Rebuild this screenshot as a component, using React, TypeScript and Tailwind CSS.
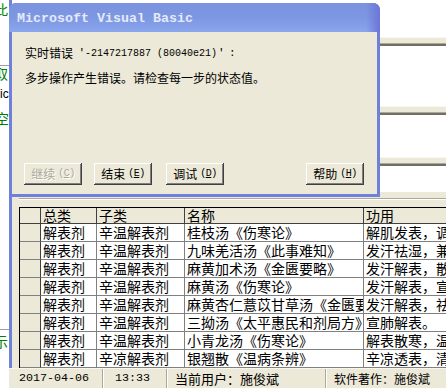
import React from "react";

const rows: string[][] = [
  ["解表剂", "辛温解表剂", "桂枝汤《伤寒论》", "解肌发表，调和营卫"],
  ["解表剂", "辛温解表剂", "九味羌活汤《此事难知》", "发汗祛湿，兼清里热"],
  ["解表剂", "辛温解表剂", "麻黄加术汤《金匮要略》", "发汗解表，散寒祛湿"],
  ["解表剂", "辛温解表剂", "麻黄汤《伤寒论》", "发汗解表，宣肺平喘"],
  ["解表剂", "辛温解表剂", "麻黄杏仁薏苡甘草汤《金匮要略》", "发汗解表，祛风除湿"],
  ["解表剂", "辛温解表剂", "三拗汤《太平惠民和剂局方》", "宣肺解表。"],
  ["解表剂", "辛温解表剂", "小青龙汤《伤寒论》", "解表散寒，温肺化饮"],
  ["解表剂", "辛凉解表剂", "银翘散《温病条辨》", "辛凉透表，清热解毒"],
];

function Bar() {
  return (
    <div className="flex flex-col">
      <div className="h-[1px] bg-[#f7f6f1]" />
      <div className="h-[5px] bg-[#ECE9D8]" />
      <div className="h-[1px] bg-[#aca899]" />
      <div className="h-[2px] bg-[#716f64]" />
    </div>
  );
}

function Btn({ label, k, disabled }: { label: string; k: string; disabled?: boolean }) {
  return (
    <div
      className={
        "w-[58px] h-[22px] flex items-center justify-center bg-[#ECE9D8] shadow-[inset_-1px_-1px_#404040,inset_1px_1px_#ffffff,inset_-2px_-2px_#808080] text-[12px] leading-none " +
        (disabled ? "text-[#aca899] [text-shadow:1px_1px_#ffffff]" : "text-black")
      }
    >
      <span className="font-['Noto_Sans_CJK_SC',sans-serif]">{label}</span>
      <span className="ml-[3px] font-['Liberation_Mono',monospace] text-[10px] tracking-[-0.5px]">
        (<span className="underline">{k}</span>)
      </span>
    </div>
  );
}

export default function App() {
  return (
    <div className="relative w-[446px] h-[388px] overflow-hidden bg-white">
      <div className="flex h-full">
        {/* window behind at left edge */}
        <div className="relative w-[9px] h-full bg-white overflow-hidden font-['Noto_Sans_CJK_SC',sans-serif] shrink-0">
          <span className="absolute top-[2px] left-[-6px] text-[14px] leading-none text-[#008000]">此</span>
          <div className="absolute top-[65px] left-0 w-full h-[1px] bg-[#a0a0a0]" />
          <span className="absolute top-[66px] left-[-6px] text-[14px] leading-none text-[#008000]">取</span>
          <span className="absolute top-[88px] left-0 text-[12px] leading-none text-black font-['Liberation_Sans',sans-serif]">ic</span>
          <span className="absolute top-[111px] left-[-5px] text-[14px] leading-none text-[#008000]">空</span>
          <div className="absolute top-[329px] left-0 w-full h-[1px] bg-[#a0a0a0]" />
          <span className="absolute top-[334px] left-[-6px] text-[14px] leading-none text-[#008000]">示</span>
        </div>

        {/* main window */}
        <div className="flex-1 flex flex-col min-w-0">
          <div className="flex-1 flex flex-col border-l-[3px] border-[#7081db] min-h-0">
            <div className="h-[192px] bg-white flex flex-col shrink-0">
              <div className="h-[37px]" />
              <Bar />
              <div className="h-[60px]" />
              <Bar />
              <div className="h-[42px]" />
              <Bar />
            </div>
            <div className="flex-1 bg-[#ECE9D8] pl-[7px] overflow-hidden flex flex-col">
              <div className="mt-[6px] h-[2px] border-t border-[#aca899] border-b border-b-white" />
              <div className="mt-[7px] w-[600px] border-t border-l border-black font-['Noto_Sans_CJK_SC',sans-serif] text-[14px] text-black">
                <div className="flex h-[16px] bg-[#ECE9D8] border-b border-[#404040] leading-[15px]">
                  <div className="w-[21px] border-r border-[#404040]" />
                  <div className="w-[56px] pl-[2px] border-r border-[#404040] overflow-hidden">总类</div>
                  <div className="w-[88px] pl-[2px] border-r border-[#404040] overflow-hidden">子类</div>
                  <div className="w-[179px] pl-[2px] border-r border-[#404040] overflow-hidden">名称</div>
                  <div className="w-[200px] pl-[2px] overflow-hidden">功用</div>
                </div>
                {rows.map((r, i) => (
                  <div key={i} className="flex h-[18px] leading-[17px]">
                    <div className="w-[21px] bg-[#ECE9D8] border-r border-[#404040] border-b border-b-[#808080]" />
                    <div className="w-[56px] pl-[2px] bg-white border-r border-b border-[#808080] overflow-hidden whitespace-nowrap">{r[0]}</div>
                    <div className="w-[88px] pl-[2px] bg-white border-r border-b border-[#808080] overflow-hidden whitespace-nowrap">{r[1]}</div>
                    <div className="w-[179px] pl-[2px] bg-white border-r border-b border-[#808080] overflow-hidden whitespace-nowrap">{r[2]}</div>
                    <div className="w-[200px] pl-[2px] bg-white border-b border-[#808080] overflow-hidden whitespace-nowrap">{r[3]}</div>
                  </div>
                ))}
              </div>
            </div>
          </div>
          {/* status bar */}
          <div className="h-[20px] shrink-0 bg-[#ECE9D8] flex text-black border-t border-[#f7f6f1]">
            <div className="w-[94px] pl-[10px] flex items-center border-r border-[#aca899] font-['Liberation_Mono',monospace] text-[11.7px]">2017-04-06</div>
            <div className="w-[64px] pl-[11px] flex items-center border-l border-white border-r border-r-[#aca899] font-['Liberation_Mono',monospace] text-[11.7px]">13:33</div>
            <div className="w-[159px] pl-[7px] flex items-center border-l border-white border-r border-r-[#aca899] font-['Noto_Sans_CJK_SC',sans-serif] text-[13px] whitespace-nowrap">当前用户：施俊斌</div>
            <div className="flex-1 pl-[7px] flex items-center border-l border-white font-['Noto_Sans_CJK_SC',sans-serif] text-[12px] whitespace-nowrap">软件著作：施俊斌</div>
          </div>
        </div>
      </div>

      {/* error dialog */}
      <div className="absolute left-[9px] top-[3px] w-[371px] h-[194px] flex flex-col rounded-t-[7px] overflow-hidden bg-[#6f80da]">
        <div className="h-[29px] shrink-0 flex items-center pl-[8px] pt-[3px] bg-gradient-to-b from-[#7b93df] via-[#7d97e2] to-[#8aa6ec] relative">
          <div className="absolute right-0 top-0 h-full w-[14px] bg-gradient-to-r from-transparent to-[#6c74d8]" />
          <span className="relative font-['Liberation_Mono',monospace] font-bold text-[13.33px] text-[#e4eafb] leading-none">Microsoft Visual Basic</span>
        </div>
        <div className="flex-1 mx-[3px] mb-[3px] bg-[#ECE9D8] flex flex-col pl-[13px] pt-[13px] pb-[9px] text-black">
          <div className="h-[16px] flex items-center text-[12px] whitespace-nowrap">
            <span className="font-['Noto_Sans_CJK_SC',sans-serif]">实时错误</span>
            <span className="w-[12px] text-right font-['Liberation_Mono',monospace] text-[11px]">'</span>
            <span className="font-['Liberation_Mono',monospace] text-[10px]">-2147217887 (80040e21)</span>
            <span className="w-[12px] text-left font-['Liberation_Mono',monospace] text-[11px] pl-[1px]">'</span>
            <span className="font-['Liberation_Mono',monospace] text-[11px]">:</span>
          </div>
          <div className="h-[16px] mt-[9px] flex items-center text-[12px] whitespace-nowrap font-['Noto_Sans_CJK_SC',sans-serif]">
            多步操作产生错误。请检查每一步的状态值。
          </div>
          <div className="mt-auto flex">
            <div className="ml-[-1px]"><Btn label="继续" k="C" disabled /></div>
            <div className="ml-[12px]"><Btn label="结束" k="E" /></div>
            <div className="ml-[14px]"><Btn label="调试" k="D" /></div>
            <div className="ml-auto mr-[13px]"><Btn label="帮助" k="H" /></div>
          </div>
        </div>
      </div>
    </div>
  );
}
